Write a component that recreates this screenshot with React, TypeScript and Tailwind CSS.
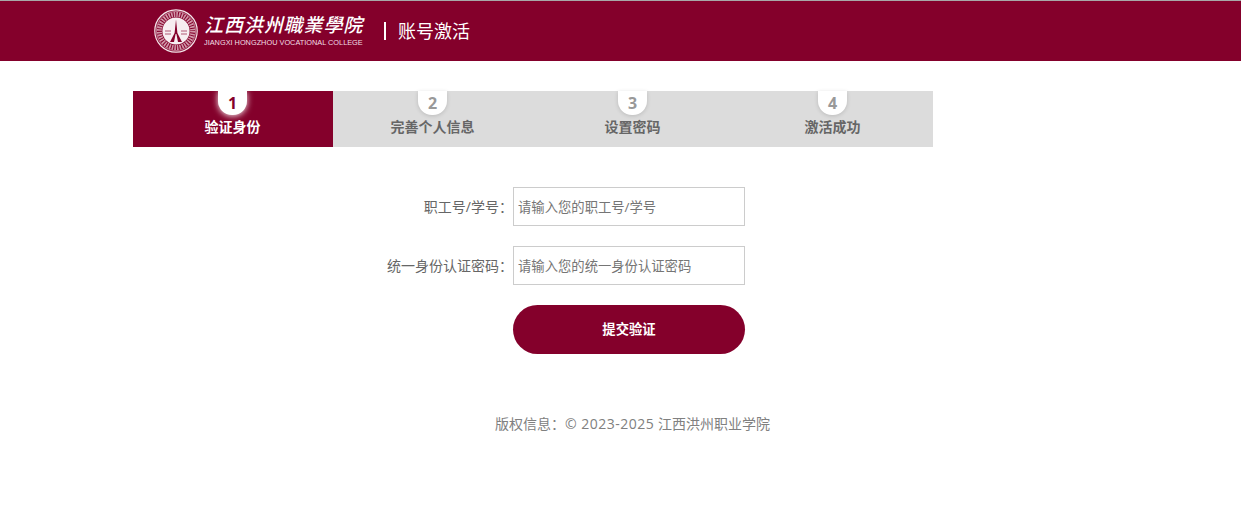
const cjk = "font-['Open_Sans','Noto_Sans_CJK_SC','Noto_Sans',sans-serif]"

const steps = ['验证身份', '完善个人信息', '设置密码', '激活成功']

const Logo = () => (
  <svg width="44" height="44" viewBox="0 0 44 44" fill="none" className="shrink-0">
    <circle cx="22" cy="22" r="21.2" stroke="#f4e6ea" strokeWidth="1.2" />
    <circle cx="22" cy="22" r="19.6" stroke="#f4e6ea" strokeWidth="0.5" />
    <circle cx="22" cy="22" r="16.6" stroke="#e9c9d3" strokeWidth="5" strokeDasharray="1.6 1" opacity="0.75" />
    <circle cx="22" cy="22" r="13.6" fill="#f7eef1" />
    <path d="M22 10.5 L20.6 24 L16 33 L20 33 L21.6 25 L22.4 25 L24 33 L28 33 L23.4 24 Z" fill="#84002b" />
    <path d="M11 22 H17 M27 22 H33 M11 25 H17 M27 25 H33" stroke="#c98a9f" strokeWidth="1.4" />
  </svg>
)

export default function App() {
  return (
    <div className={`min-h-[514px] bg-white ${cjk}`}>
      <header className="h-[61px] border-t border-t-[#a8a8a8] bg-[#84002b] pl-[154px] flex items-center">
        <Logo />
        <div className="ml-[6px] w-[160px] text-white">
          <div className="text-[19px] leading-[22px] tracking-[0.9px] italic whitespace-nowrap font-['Noto_Sans_CJK_TC',serif] font-medium -mt-[2px] mb-[3px]">
            江西洪州職業學院
          </div>
          <div className="text-[7.35px] leading-[9px] whitespace-nowrap font-['Liberation_Sans',sans-serif] text-[#f3dfe5]">
            JIANGXI HONGZHOU VOCATIONAL COLLEGE
          </div>
        </div>
        <div className="ml-[20px] h-[18px] w-[2px] bg-white" />
        <div className="ml-3 pb-0.5 text-[18px] text-white font-['Noto_Sans_CJK_SC',sans-serif]">账号激活</div>
      </header>

      <ol className="ml-[133px] mt-[30px] flex w-[800px] bg-[#dcdcdc]">
        {steps.map((s, i) => (
          <li
            key={s}
            className={`flex h-14 w-[200px] flex-col items-center ${i === 0 ? 'bg-[#84002b] text-white' : 'text-[#666]'}`}
          >
            <span
              className={`mr-px flex h-6 w-[29px] items-center justify-center rounded-b-[14px] bg-white text-base font-bold ${
                i === 0
                  ? 'text-[#84002b] shadow-[0_1px_6px_rgba(255,255,255,0.9)]'
                  : 'text-[#999] shadow-[0_1px_4px_rgba(0,0,0,0.15)]'
              }`}
            >
              {i + 1}
            </span>
            <span className="mr-px text-sm leading-6 font-bold">{s}</span>
          </li>
        ))}
      </ol>

      <form className="mt-10 flex flex-col gap-5 pl-[513px]">
        <div className="relative w-[232px]">
          <label className="absolute right-full top-0 whitespace-nowrap text-sm leading-[39px] text-[#666]">
            职工号/学号：
          </label>
          <input
            placeholder="请输入您的职工号/学号"
            className="h-[39px] w-full border border-[#ccc] px-1 text-[13.33px] outline-none placeholder:text-[#757575]"
          />
        </div>
        <div className="relative w-[232px]">
          <label className="absolute right-full top-0 whitespace-nowrap text-sm leading-[39px] text-[#666]">
            统一身份认证密码：
          </label>
          <input
            placeholder="请输入您的统一身份认证密码"
            className="h-[39px] w-full border border-[#ccc] px-1 text-[13.33px] outline-none placeholder:text-[#757575]"
          />
        </div>
        <button
          type="button"
          className="h-[49px] w-[232px] rounded-full bg-[#84002b] text-[13.33px] font-bold text-white"
        >
          提交验证
        </button>
      </form>

      <footer className="mt-[60px] w-[1265px] text-center text-sm leading-5 text-[#808080]">
        版权信息：<span className="tracking-[0.5px]">© 2023-2025</span> 江西洪州职业学院
      </footer>
    </div>
  )
}
